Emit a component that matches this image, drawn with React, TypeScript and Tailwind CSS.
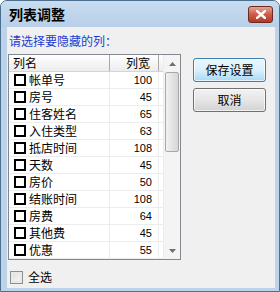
import { Fragment } from 'react';

const columns = [
  { name: '帐单号', width: 100 },
  { name: '房号', width: 45 },
  { name: '住客姓名', width: 65 },
  { name: '入住类型', width: 63 },
  { name: '抵店时间', width: 108 },
  { name: '天数', width: 45 },
  { name: '房价', width: 50 },
  { name: '结账时间', width: 108 },
  { name: '房费', width: 64 },
  { name: '其他费', width: 45 },
  { name: '优惠', width: 55 },
];

const cjk = "font-['Noto_Sans_CJK_SC','Noto_Sans',sans-serif]";

function Arrow({ up }: { up?: boolean }) {
  return (
    <svg width="7" height="4" viewBox="0 0 7 4">
      <path d={up ? 'M0 4 L3.5 0 L7 4 Z' : 'M0 0 L3.5 4 L7 0 Z'} fill="#6f6f6f" />
    </svg>
  );
}

export default function App() {
  return (
    <div className={`w-[280px] h-[292px] bg-[#bcd3ea] border border-[#4a6f8f] rounded-t-[7px] flex flex-col overflow-hidden ${cjk}`}>
      {/* Title bar */}
      <div className="h-[26px] flex items-center justify-between pl-[8px] pr-[6px] bg-gradient-to-b from-[#c9dcf0] to-[#b7cfe8]">
        <span className="text-[14px] leading-[16px] font-bold text-black">列表调整</span>
        <button className="w-[25px] h-[17px] rounded-[3px] border border-[#6b2a22] bg-gradient-to-b from-[#e5a594] via-[#cf5a45] to-[#b23a25] flex items-center justify-center">
          <svg width="10" height="9" viewBox="0 0 10 9">
            <path d="M1 1 L9 8 M9 1 L1 8" stroke="#ffffff" strokeWidth="2.4" strokeLinecap="square" />
          </svg>
        </button>
      </div>

      {/* Client area */}
      <div className="flex-1 bg-[#f0f0f0] ml-[6px] mr-[4px] mb-[3px] pt-[6px] pl-[1px] flex flex-col">
        <div className="pl-[1px] h-[15px] text-[12px] leading-[15px] text-[#1c3cd0]">请选择要隐藏的列：</div>

        <div className="flex mt-[6px]">
          {/* List */}
          <div className="w-[173px] h-[206px] border border-[#828790] bg-white flex">
            <div className="w-[154px] flex flex-col">
              <div className="h-[17px] flex border-b border-[#d5d5d5] bg-gradient-to-b from-[#ffffff] to-[#ececec] text-[12px] leading-[16px] text-black">
                <div className="w-[101px] pl-[4px] border-r border-[#a9a9a9]">列名</div>
                <div className="w-[49px] pr-[8px] text-right border-r border-[#a9a9a9]">列宽</div>
                <div className="flex-1" />
              </div>
              {columns.map((c) => (
                <Fragment key={c.name}>
                  <div className="h-[17px] flex border-b border-[#ececec]">
                    <div className="w-[101px] pl-[5px] flex items-center gap-[3px] border-r border-[#ececec]">
                      <span className="w-[12px] h-[12px] border-2 border-black bg-white" />
                      <span className="text-[12px] leading-[16px] text-black">{c.name}</span>
                    </div>
                    <div className="w-[49px] pr-[6px] flex items-center justify-end border-r border-[#ececec]">
                      <span className="font-['Liberation_Sans',sans-serif] text-[11px] leading-[16px] text-black">{c.width}</span>
                    </div>
                  </div>
                </Fragment>
              ))}
            </div>

            {/* Scrollbar */}
            <div className="w-[17px] flex flex-col bg-[#f4f4f4] border-l border-[#ececec]">
              <div className="h-[17px] flex items-center justify-center">
                <Arrow up />
              </div>
              <div className="flex-1 flex flex-col px-[1px]">
                <div className="h-[80px] rounded-[2px] border border-[#a8a8a8] bg-gradient-to-r from-[#f2f2f2] via-[#e4e4e4] to-[#d6d6d6]" />
              </div>
              <div className="h-[17px] flex items-center justify-center">
                <Arrow />
              </div>
            </div>
          </div>

          {/* Buttons */}
          <div className="ml-[12px] mt-[4px] flex flex-col gap-[6px]">
            <button className="w-[73px] h-[24px] rounded-[3px] border border-[#3c7fb1] bg-gradient-to-b from-[#eaf6fd] via-[#d9f0fc] to-[#a7d9f5] text-[12px] leading-[16px] text-black shadow-[inset_0_0_0_1px_rgba(255,255,255,0.7)]">
              保存设置
            </button>
            <button className="w-[73px] h-[24px] rounded-[3px] border border-[#707070] bg-gradient-to-b from-[#f2f2f2] via-[#e6e6e6] to-[#d2d2d2] text-[12px] leading-[16px] text-black shadow-[inset_0_0_0_1px_rgba(255,255,255,0.7)]">
              取消
            </button>
          </div>
        </div>

        {/* Select all */}
        <div className="mt-[9px] ml-[2px] flex items-center gap-[5px]">
          <span className="w-[13px] h-[13px] border border-[#8f8f8f] bg-gradient-to-br from-[#dcdcdc] to-[#fbfbfb] shadow-[inset_0_0_0_2px_#e9e9e9]" />
          <span className="text-[12px] leading-[16px] text-black">全选</span>
        </div>
      </div>
    </div>
  );
}
